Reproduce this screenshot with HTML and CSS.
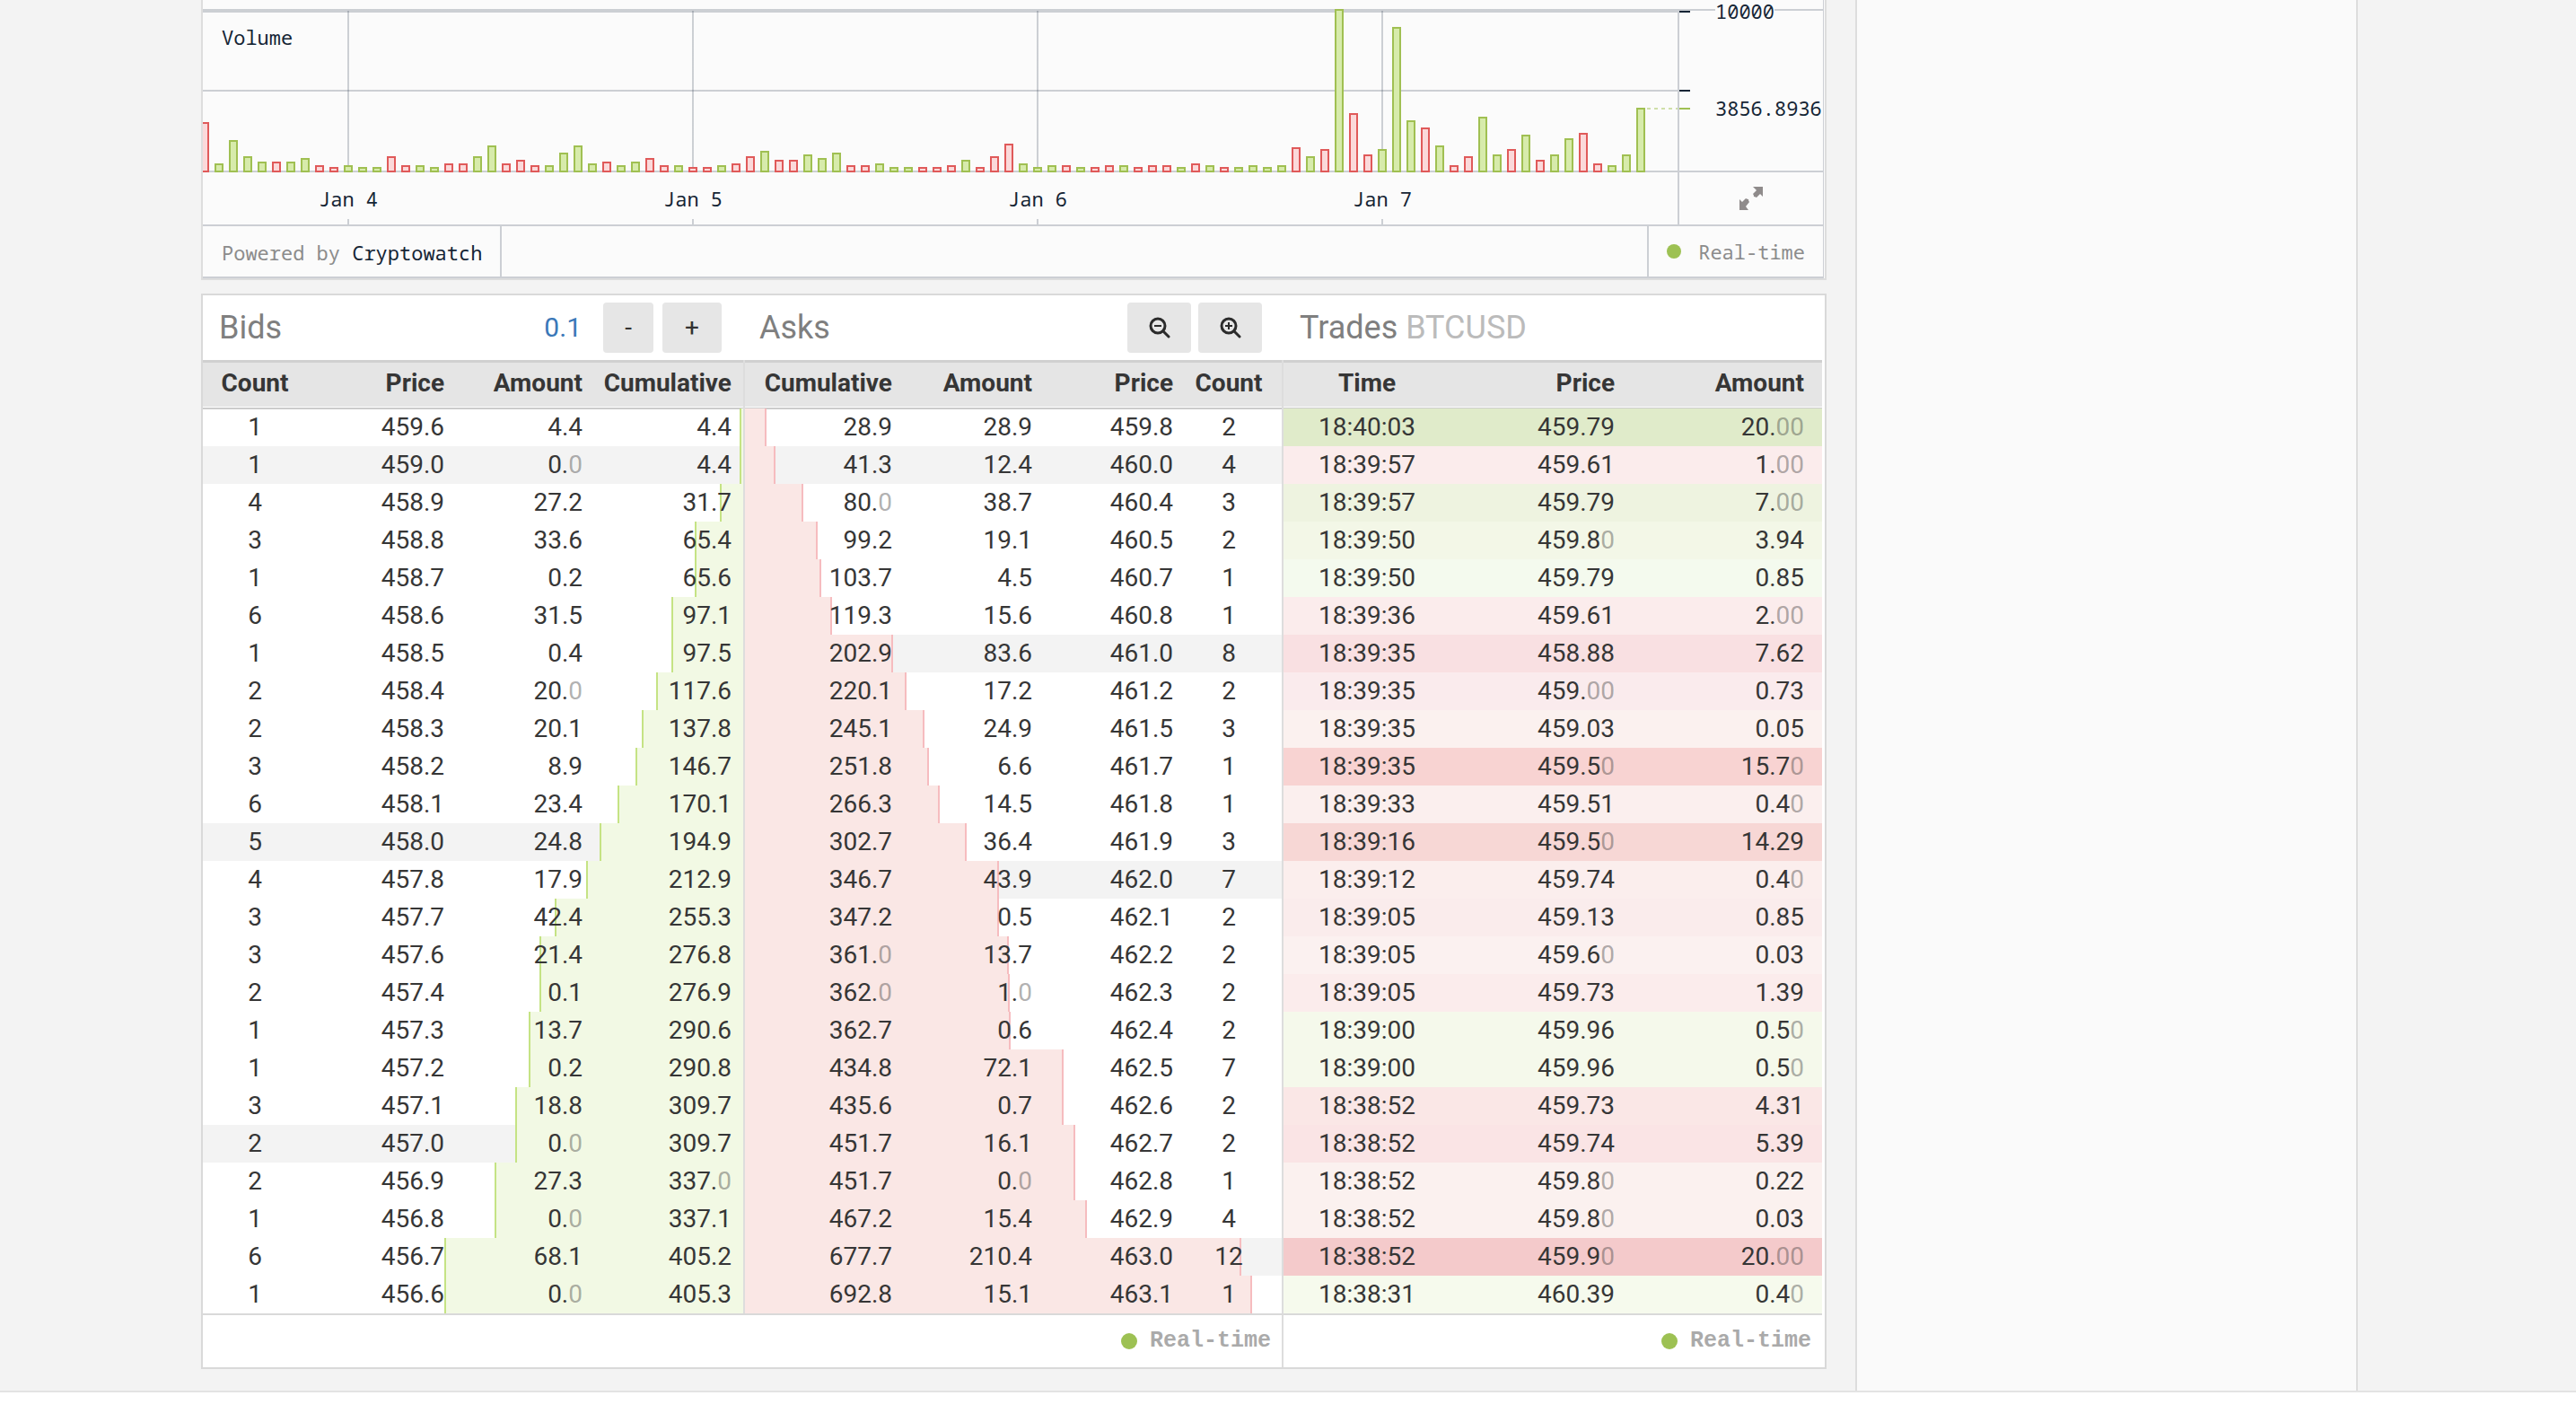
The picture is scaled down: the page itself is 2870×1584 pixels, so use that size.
FILE: index.html
```html
<!DOCTYPE html>
<html lang="en">
<head>
<meta charset="utf-8">
<title>BTCUSD order book</title>
<link rel="stylesheet" href="styles.css">
</head>
<body>
<main class="page">
<div class="content">

<section class="chart" aria-label="Volume chart">
<div class="chart-frame">
<div class="pane">
<div class="plot">
<h2 class="plot-label">Volume</h2>
<i class="dn" style="height:56px"></i><i class="up" style="height:10px"></i><i class="up" style="height:36px"></i><i class="up" style="height:18px"></i><i class="up" style="height:12px"></i><i class="dn" style="height:12px"></i><i class="up" style="height:12px"></i><i class="up" style="height:16px"></i><i class="dn" style="height:8px"></i><i class="dn" style="height:6px"></i>
<i class="up" style="height:8px"></i><i class="up" style="height:6px"></i><i class="up" style="height:6px"></i><i class="dn" style="height:18px"></i><i class="dn" style="height:8px"></i><i class="up" style="height:8px"></i><i class="up" style="height:6px"></i><i class="dn" style="height:10px"></i><i class="dn" style="height:10px"></i><i class="up" style="height:18px"></i>
<i class="up" style="height:30px"></i><i class="dn" style="height:10px"></i><i class="dn" style="height:14px"></i><i class="dn" style="height:8px"></i><i class="up" style="height:8px"></i><i class="up" style="height:22px"></i><i class="up" style="height:30px"></i><i class="up" style="height:10px"></i><i class="dn" style="height:12px"></i><i class="up" style="height:8px"></i>
<i class="up" style="height:12px"></i><i class="dn" style="height:16px"></i><i class="dn" style="height:8px"></i><i class="up" style="height:8px"></i><i class="dn" style="height:6px"></i><i class="dn" style="height:6px"></i><i class="up" style="height:8px"></i><i class="dn" style="height:10px"></i><i class="dn" style="height:18px"></i><i class="up" style="height:24px"></i>
<i class="dn" style="height:14px"></i><i class="dn" style="height:14px"></i><i class="up" style="height:20px"></i><i class="up" style="height:16px"></i><i class="up" style="height:22px"></i><i class="dn" style="height:8px"></i><i class="dn" style="height:8px"></i><i class="up" style="height:10px"></i><i class="up" style="height:6px"></i><i class="up" style="height:6px"></i>
<i class="dn" style="height:6px"></i><i class="dn" style="height:6px"></i><i class="dn" style="height:8px"></i><i class="up" style="height:14px"></i><i class="dn" style="height:6px"></i><i class="dn" style="height:18px"></i><i class="dn" style="height:32px"></i><i class="up" style="height:10px"></i><i class="up" style="height:6px"></i><i class="up" style="height:8px"></i>
<i class="dn" style="height:8px"></i><i class="up" style="height:6px"></i><i class="dn" style="height:6px"></i><i class="dn" style="height:8px"></i><i class="up" style="height:8px"></i><i class="dn" style="height:6px"></i><i class="dn" style="height:8px"></i><i class="dn" style="height:8px"></i><i class="up" style="height:6px"></i><i class="dn" style="height:10px"></i>
<i class="up" style="height:8px"></i><i class="dn" style="height:6px"></i><i class="up" style="height:6px"></i><i class="up" style="height:8px"></i><i class="up" style="height:6px"></i><i class="up" style="height:8px"></i><i class="dn" style="height:28px"></i><i class="up" style="height:18px"></i><i class="dn" style="height:26px"></i><i class="up" style="height:182px"></i>
<i class="dn" style="height:66px"></i><i class="dn" style="height:20px"></i><i class="up" style="height:26px"></i><i class="up" style="height:162px"></i><i class="up" style="height:58px"></i><i class="dn" style="height:50px"></i><i class="up" style="height:30px"></i><i class="dn" style="height:8px"></i><i class="dn" style="height:18px"></i><i class="up" style="height:62px"></i>
<i class="up" style="height:20px"></i><i class="dn" style="height:26px"></i><i class="up" style="height:42px"></i><i class="dn" style="height:14px"></i><i class="up" style="height:20px"></i><i class="up" style="height:38px"></i><i class="dn" style="height:44px"></i><i class="dn" style="height:10px"></i><i class="up" style="height:8px"></i><i class="up" style="height:20px"></i>
<i class="up" style="height:72px"></i>
<span class="last-line"></span>
</div>
<div class="scale">
<span class="tick tick-top"></span><span class="scale-label label-top">10000</span>
<span class="tick tick-mid"></span>
<span class="tick tick-last"></span><span class="scale-label label-last">3856.8936</span>
</div>
</div>
<div class="dates">
<div class="date-row"><span>Jan 4</span><span>Jan 5</span><span>Jan 6</span><span>Jan 7</span></div>
<button class="expand" type="button" aria-label="Expand chart"><svg width="28" height="28" viewBox="0 0 28 28"><path d="M16 1h11v11l-3-3-4 4q-2-1-3-1 0-2-1-3l4-4zM1 27V15l3 3 4-4q2 1 3 1 0 2 1 3l-4 5 3 4z"/></svg></button>
</div>
<footer class="chart-foot">
<p class="credit">Powered by <a href="#cryptowatch">Cryptowatch</a></p>
<p class="live"><span class="dot"></span>Real-time</p>
</footer>
</div>
</section>

<section class="book">
<div class="panel bids">
<header class="head"><h2>Bids</h2><div class="tools step"><a href="#precision">0.1</a><button type="button" class="less">-</button><button type="button" class="more">+</button></div></header>
<table>
<colgroup><col class="w116"><col class="w166"><col class="w154"><col class="w166"></colgroup>
<thead><tr><th>Count<th>Price<th>Amount<th>Cumulative</thead>
<tbody>
<tr style="--c:4.4"><td>1<td>459.6<td>4.4<td>4.4
<tr class="mark" style="--c:4.4"><td>1<td>459.0<td>0.<i>0</i><td>4.4
<tr style="--c:31.7"><td>4<td>458.9<td>27.2<td>31.7
<tr style="--c:65.4"><td>3<td>458.8<td>33.6<td>65.4
<tr style="--c:65.6"><td>1<td>458.7<td>0.2<td>65.6
<tr style="--c:97.1"><td>6<td>458.6<td>31.5<td>97.1
<tr style="--c:97.5"><td>1<td>458.5<td>0.4<td>97.5
<tr style="--c:117.6"><td>2<td>458.4<td>20.<i>0</i><td>117.6
<tr style="--c:137.8"><td>2<td>458.3<td>20.1<td>137.8
<tr style="--c:146.7"><td>3<td>458.2<td>8.9<td>146.7
<tr style="--c:170.1"><td>6<td>458.1<td>23.4<td>170.1
<tr class="mark" style="--c:194.9"><td>5<td>458.0<td>24.8<td>194.9
<tr style="--c:212.9"><td>4<td>457.8<td>17.9<td>212.9
<tr style="--c:255.3"><td>3<td>457.7<td>42.4<td>255.3
<tr style="--c:276.8"><td>3<td>457.6<td>21.4<td>276.8
<tr style="--c:276.9"><td>2<td>457.4<td>0.1<td>276.9
<tr style="--c:290.6"><td>1<td>457.3<td>13.7<td>290.6
<tr style="--c:290.8"><td>1<td>457.2<td>0.2<td>290.8
<tr style="--c:309.7"><td>3<td>457.1<td>18.8<td>309.7
<tr class="mark" style="--c:309.7"><td>2<td>457.0<td>0.<i>0</i><td>309.7
<tr style="--c:337"><td>2<td>456.9<td>27.3<td>337.<i>0</i>
<tr style="--c:337.1"><td>1<td>456.8<td>0.<i>0</i><td>337.1
<tr style="--c:405.2"><td>6<td>456.7<td>68.1<td>405.2
<tr style="--c:405.3"><td>1<td>456.6<td>0.<i>0</i><td>405.3
</tbody>
</table>
<footer class="foot"></footer>
</div>

<div class="panel asks">
<header class="head"><h2>Asks</h2><div class="tools zoom">
<button type="button" aria-label="Zoom out"><svg width="24" height="24" viewBox="0 0 24 24"><circle cx="10" cy="10" r="8"/><path d="M16 16l6 6"/><path class="thin" d="M6 10h8"/></svg></button>
<button type="button" aria-label="Zoom in"><svg width="24" height="24" viewBox="0 0 24 24"><circle cx="10" cy="10" r="8"/><path d="M16 16l6 6"/><path class="thin" d="M6 10h8M10 6v8"/></svg></button>
</div></header>
<table>
<colgroup><col class="w177"><col class="w156"><col class="w157"><col class="w108"></colgroup>
<thead><tr><th>Cumulative<th>Amount<th>Price<th>Count</thead>
<tbody>
<tr style="--c:28.9"><td>28.9<td>28.9<td>459.8<td>2
<tr class="mark" style="--c:41.3"><td>41.3<td>12.4<td>460.0<td>4
<tr style="--c:80"><td>80.<i>0</i><td>38.7<td>460.4<td>3
<tr style="--c:99.2"><td>99.2<td>19.1<td>460.5<td>2
<tr style="--c:103.7"><td>103.7<td>4.5<td>460.7<td>1
<tr style="--c:119.3"><td>119.3<td>15.6<td>460.8<td>1
<tr class="mark" style="--c:202.9"><td>202.9<td>83.6<td>461.0<td>8
<tr style="--c:220.1"><td>220.1<td>17.2<td>461.2<td>2
<tr style="--c:245.1"><td>245.1<td>24.9<td>461.5<td>3
<tr style="--c:251.8"><td>251.8<td>6.6<td>461.7<td>1
<tr style="--c:266.3"><td>266.3<td>14.5<td>461.8<td>1
<tr style="--c:302.7"><td>302.7<td>36.4<td>461.9<td>3
<tr class="mark" style="--c:346.7"><td>346.7<td>43.9<td>462.0<td>7
<tr style="--c:347.2"><td>347.2<td>0.5<td>462.1<td>2
<tr style="--c:361"><td>361.<i>0</i><td>13.7<td>462.2<td>2
<tr style="--c:362"><td>362.<i>0</i><td>1.<i>0</i><td>462.3<td>2
<tr style="--c:362.7"><td>362.7<td>0.6<td>462.4<td>2
<tr style="--c:434.8"><td>434.8<td>72.1<td>462.5<td>7
<tr style="--c:435.6"><td>435.6<td>0.7<td>462.6<td>2
<tr style="--c:451.7"><td>451.7<td>16.1<td>462.7<td>2
<tr style="--c:451.7"><td>451.7<td>0.<i>0</i><td>462.8<td>1
<tr style="--c:467.2"><td>467.2<td>15.4<td>462.9<td>4
<tr class="mark" style="--c:677.7"><td>677.7<td>210.4<td>463.0<td>12
<tr style="--c:692.8"><td>692.8<td>15.1<td>463.1<td>1
</tbody>
</table>
<footer class="foot"><span class="dot"></span>Real-time</footer>
</div>

<div class="panel trades">
<header class="head"><h2>Trades <span>BTCUSD</span></h2></header>
<table>
<colgroup><col class="w184"><col class="w198"><col class="w218"></colgroup>
<thead><tr><th>Time<th>Price<th>Amount</thead>
<tbody>
<tr style="background:#e0ebca"><td>18:40:03<td>459.79<td>20.<i>00</i>
<tr style="background:#fbecec"><td>18:39:57<td>459.61<td>1.<i>00</i>
<tr style="background:#eef3e0"><td>18:39:57<td>459.79<td>7.<i>00</i>
<tr style="background:#f3f7e7"><td>18:39:50<td>459.8<i>0</i><td>3.94
<tr style="background:#f4faee"><td>18:39:50<td>459.79<td>0.85
<tr style="background:#fbecec"><td>18:39:36<td>459.61<td>2.<i>00</i>
<tr style="background:#f9e0e2"><td>18:39:35<td>458.88<td>7.62
<tr style="background:#faebed"><td>18:39:35<td>459.<i>00</i><td>0.73
<tr style="background:#fbf1ef"><td>18:39:35<td>459.03<td>0.05
<tr style="background:#f8d3d2"><td>18:39:35<td>459.5<i>0</i><td>15.7<i>0</i>
<tr style="background:#fbefee"><td>18:39:33<td>459.51<td>0.4<i>0</i>
<tr style="background:#f7d7d5"><td>18:39:16<td>459.5<i>0</i><td>14.29
<tr style="background:#fbeeed"><td>18:39:12<td>459.74<td>0.4<i>0</i>
<tr style="background:#faecec"><td>18:39:05<td>459.13<td>0.85
<tr style="background:#fbf1f0"><td>18:39:05<td>459.6<i>0</i><td>0.03
<tr style="background:#fbecec"><td>18:39:05<td>459.73<td>1.39
<tr style="background:#f5f9eb"><td>18:39:00<td>459.96<td>0.5<i>0</i>
<tr style="background:#f5f9eb"><td>18:39:00<td>459.96<td>0.5<i>0</i>
<tr style="background:#fae7e6"><td>18:38:52<td>459.73<td>4.31
<tr style="background:#fae4e5"><td>18:38:52<td>459.74<td>5.39
<tr style="background:#fbf1ef"><td>18:38:52<td>459.8<i>0</i><td>0.22
<tr style="background:#fbf1ef"><td>18:38:52<td>459.8<i>0</i><td>0.03
<tr style="background:#f4cacb"><td>18:38:52<td>459.9<i>0</i><td>20.<i>00</i>
<tr style="background:#f6faed"><td>18:38:31<td>460.39<td>0.4<i>0</i>
</tbody>
</table>
<footer class="foot"><span class="dot"></span>Real-time</footer>
</div>
</section>

</div>
<aside class="sidebar"></aside>
</main>
</body>
</html>
```
FILE: styles.css
```css
* { box-sizing: border-box; }

:root {
  --edge: #d9d9d9;
  --rule: #cccfd4;
  --grid: rgba(16, 32, 54, .2);
  --ink: #152535;
  --green: #9dc153;
}

body {
  margin: 0;
  background: #fff;
  color: #363636;
  font: 28px/42px Roboto, "Open Sans", sans-serif;
}

h2, p { margin: 0; font-weight: 400; }
a { text-decoration: none; }
button { padding: 0; border: 0; font: inherit; color: inherit; cursor: pointer; }
i { font-style: normal; }

.page {
  display: grid;
  grid-template-columns: minmax(0, 1811fr) minmax(0, 560fr);
  column-gap: 32px;
  padding: 0 243px 0 224px;
  background: #f3f3f3;
  border-bottom: 2px solid #e3e3e3;
}
.content { padding-bottom: 24px; }
.sidebar { background: #fafafa; border: solid #ddd; border-width: 0 2px; }
.dot { width: 18px; height: 18px; border-radius: 50%; background: var(--green); }

/* Volume chart */
.chart {
  margin-bottom: 15px;
  padding-right: 1px;
  background: #fbfbfb;
  border: solid #ddd;
  border-width: 0 2px 2px;
  color: var(--ink);
  font: 22px/24px "Noto Sans Mono", "Droid Sans Mono", "DejaVu Sans Mono", monospace;
}
.chart-frame { border: solid var(--rule); border-width: 0 1px 2px 0; }
.pane, .dates { display: grid; grid-template-columns: minmax(0, 1fr) 162px; }
.plot {
  position: relative;
  display: flex;
  justify-content: flex-end;
  align-items: flex-end;
  gap: 6px;
  height: 192px;
  padding-right: 36px;
  overflow: hidden;
  background:
    linear-gradient(var(--grid), var(--grid)) 0 10px / 100% 4px no-repeat,
    linear-gradient(var(--grid), var(--grid)) 0 100px / 100% 2px no-repeat,
    linear-gradient(var(--grid), var(--grid)) 0 190px / 100% 2px no-repeat,
    linear-gradient(to left, var(--grid) 2px, transparent 2px) right 328px top 12px / 384px 178px repeat-x;
}
.plot-label { position: absolute; left: 21px; top: 29px; font-size: 22px; }
.up, .dn { flex: none; width: 10px; border: 2px solid; }
.up { background: #d7ebab; border-color: #a0c052; }
.dn { background: #fbd9da; border-color: #e05a5a; }
.last-line {
  position: absolute; right: 0; bottom: 70px; width: 34px; height: 2px;
  background: repeating-linear-gradient(to right, #cfdfa9 0 4px, transparent 4px 8px);
}
.scale {
  position: relative;
  background:
    linear-gradient(var(--rule), var(--rule)) 0 10px / 100% 2px no-repeat,
    linear-gradient(var(--rule), var(--rule)) 0 190px / 100% 2px no-repeat,
    linear-gradient(var(--rule), var(--rule)) 0 12px / 2px 100% no-repeat;
}
.tick { position: absolute; left: 2px; width: 12px; height: 2px; background: var(--ink); }
.tick-top { top: 12px; }
.tick-mid { top: 100px; }
.tick-last { top: 120px; background: #a0c052; }
.scale-label { position: absolute; left: 42px; background: #fbfbfb; }
.label-top { top: 0; }
.label-last { top: 108px; }

.dates { border-bottom: 2px solid var(--rule); }
.date-row { display: flex; justify-content: flex-end; height: 58px; padding-right: 137px; overflow: hidden; }
.date-row span { flex: none; width: 384px; padding-top: 17px; text-align: center; background: linear-gradient(var(--rule), var(--rule)) center bottom / 2px 6px no-repeat; }
.expand { display: grid; place-items: center; background: none; border-left: 2px solid var(--rule); fill: #8f8b8b; }

.chart-foot { display: flex; justify-content: space-between; height: 56px; line-height: 58px; color: #8c8c8c; }
.credit { padding: 0 20px 0 21px; border-right: 2px solid var(--rule); }
.credit a { color: var(--ink); }
.live { display: flex; align-items: center; gap: 19px; padding: 0 20px; border-left: 2px solid var(--rule); }
.live .dot { width: 16px; height: 16px; }

/* Order book and trades */
.book {
  display: grid;
  grid-template-columns: minmax(0, 604fr) minmax(0, 600fr) minmax(0, 603fr);
  background: #fff;
  border: 2px solid var(--edge);
}
.panel { display: flex; flex-direction: column; }
.trades { padding-right: 3px; }

.head { display: flex; align-items: center; justify-content: space-between; height: 72px; padding-left: 18px; }
.asks .head { padding-left: 16px; }
.head h2 { font-size: 36px; color: #7f7f7f; }
.head h2 span { color: #bbb; }
.tools { display: flex; align-items: center; gap: 8px; padding-right: 24px; }
.step { gap: 10px; padding-right: 26px; }
.tools a { margin-right: 14px; font-size: 30px; color: #3b78b8; }
.tools button { height: 56px; border-radius: 4px; background: #e6e6e6; color: #333; }
.tools .less { width: 56px; }
.tools .more { width: 66px; }
.zoom button { display: grid; place-items: center; width: 71px; }
.zoom svg { fill: none; stroke: #2b2b2b; stroke-width: 3; stroke-linecap: round; }
.zoom .thin { stroke-width: 2; stroke-linecap: butt; }

table { width: 100%; table-layout: fixed; border-collapse: separate; border-spacing: 0; }
.bids table, .asks table { border-right: 2px solid #ddd; }
th, td { padding: 0 13px 0 0; text-align: right; white-space: nowrap; }
th {
  height: 54px;
  border-top: 3px solid #d0d0d0;
  border-bottom: 1px solid #ccc;
  background: #e5e5e5;
  box-shadow: inset 0 -1px #fff, 0 1px #ccc;
  line-height: 46px;
  vertical-align: top;
}
td { height: 42px; }
td i { color: rgba(51, 51, 51, .4); }
.bids th:first-child, .bids td:first-child { padding: 0; text-align: center; }
.trades th:first-child, .trades td:first-child { padding: 0 0 0 2px; text-align: center; }
.asks th:last-child, .asks td:last-child { padding: 0 10px 0 0; text-align: center; }
.trades th:last-child, .trades td:last-child { padding-right: 20px; }

.w108 { width: 108px; }
.w116 { width: 116px; }
.w154 { width: 154px; }
.w156 { width: 156px; }
.w157 { width: 157px; }
.w166 { width: 166px; }
.w177 { width: 177px; }
.w184 { width: 184px; }
.w198 { width: 198px; }
.w218 { width: 218px; }

/* Depth bars: --c is the cumulative amount of the row */
.bids tbody tr, .asks tbody tr {
  --d: calc(var(--c) * .1364%);
  background-image: linear-gradient(var(--from), var(--fill) calc(var(--d) - 2px), var(--line) calc(var(--d) - 2px), var(--line) var(--d), transparent var(--d));
}
.bids { --from: to left; --fill: #f2f9e4; --line: #c5e384; }
.asks { --from: to right; --fill: #fae7e5; --line: #f6bcbf; }
.mark { background-color: #f3f3f3; }

.foot {
  display: flex;
  align-items: center;
  justify-content: flex-end;
  gap: 14px;
  height: 60px;
  padding-right: 12px;
  border-top: 2px solid #d9d9d9;
  color: #aaa;
  font: bold 25px/60px "Courier New", "Liberation Mono", monospace;
}
.book { height: min-content; }
.asks .foot { border-right: 2px solid #ddd; }
```
